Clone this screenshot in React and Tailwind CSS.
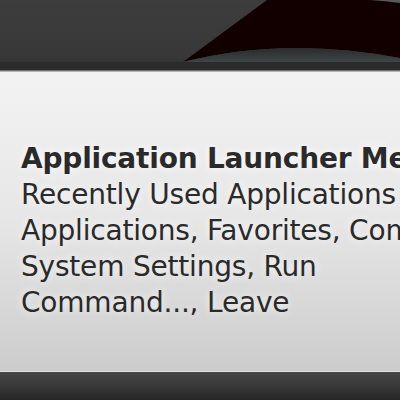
import React from 'react';

const lines = [
  'Recently Used Applications',
  'Applications, Favorites, Computer,',
  'System Settings, Run',
  'Command..., Leave',
];

const Backdrop = () => (
  <svg width="400" height="70" viewBox="0 0 400 70" className="block">
    <defs>
      <linearGradient id="bg" x1="0" y1="0" x2="0" y2="1">
        <stop offset="0" stopColor="#3d3d3d" />
        <stop offset="0.8" stopColor="#383838" />
        <stop offset="1" stopColor="#2e2e2e" />
      </linearGradient>
      <linearGradient id="band" x1="0" y1="0" x2="0" y2="1">
        <stop offset="0" stopColor="#2a2c2c" />
        <stop offset="1" stopColor="#3f4445" />
      </linearGradient>
    </defs>
    <rect width="400" height="70" fill="url(#bg)" />
    <path d="M183 62 L267 0 L400 0 L400 58 Q285 36 183 62 Z" fill="#120000" />
    <path d="M183 62 Q285 36 400 58 L400 62 Z" fill="url(#band)" />
    <path d="M370 0 L400 0 L400 3 Q385 1 370 0 Z" fill="#5a5a5a" />
    <rect y="62" width="400" height="8" fill="#2b2b2b" />
  </svg>
);

const App = () => {
  return (
    <div className="w-[400px] h-[400px] overflow-hidden flex flex-col bg-[#2b2b2b]">
      <Backdrop />
      <div className="h-px bg-[#6f6f6f]" />
      <div className="h-px bg-[#b4b4b4]" />
      <div className="h-[299px] bg-gradient-to-b from-[#f3f3f3] via-[#e6e6e6] to-[#cccccc] pl-[21px] pt-[69px] overflow-hidden">
        <div className="font-['DejaVu_Sans',sans-serif] text-[28px] leading-[36px] tracking-[-0.2px] text-[#2a2a2a] whitespace-nowrap [text-shadow:0_0_10px_#ffffff]">
          <div className="font-bold">Application Launcher Menu</div>
          {lines.map((l) => (
            <div key={l}>{l}</div>
          ))}
        </div>
      </div>
      <div className="h-px bg-[#e4e4e4]" />
      <div className="flex-1 bg-gradient-to-b from-[#474747] via-[#3a3a3a] to-[#262626]" />
    </div>
  );
};

export default App;
